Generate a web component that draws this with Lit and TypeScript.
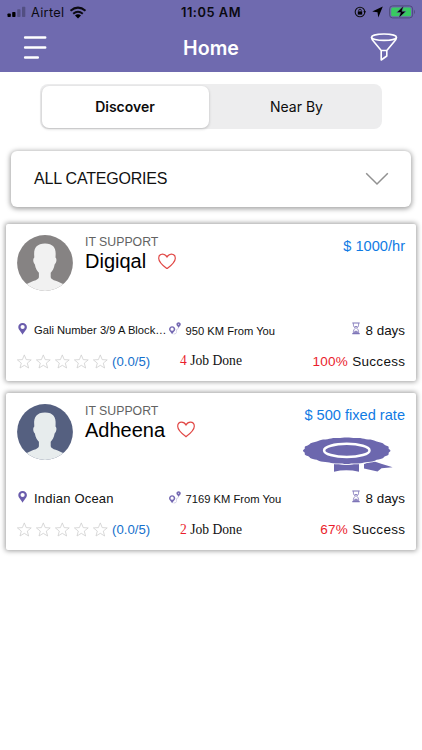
import { LitElement, html, css, svg, nothing } from "lit";
import { customElement, property } from "lit/decorators.js";

interface Provider {
  category: string;
  name: string;
  price: string;
  place: string;
  longPlace: boolean;
  distance: string;
  days: string;
  jobs: string;
  success: string;
  dark: boolean;
  badge: boolean;
}

const providers: Provider[] = [
  { category: "IT SUPPORT", name: "Digiqal", price: "$ 1000/hr", place: "Gali Number 3/9 A Block…", longPlace: true, distance: "950 KM From You", days: "8 days", jobs: "4", success: "100%", dark: false, badge: false },
  { category: "IT SUPPORT", name: "Adheena", price: "$ 500 fixed rate", place: "Indian Ocean", longPlace: false, distance: "7169 KM From You", days: "8 days", jobs: "2", success: "67%", dark: true, badge: true },
];

// Scalloped outline of the ribbon rosette
const rosette = Array.from({ length: 120 }, (_, i) => {
  const a = (i / 120) * Math.PI * 2;
  const k = 0.985 + 0.015 * Math.cos(a * 20);
  return `${(43.7 + 43.8 * k * Math.cos(a)).toFixed(1)},${(13.7 + 13.3 * k * Math.sin(a)).toFixed(1)}`;
}).join(" ");

const star = svg`<path d="M7.5 .9 9.4 5.6 14.4 5.9 10.5 9.1 11.8 14 7.5 11.3 3.2 14 4.5 9.1 .6 5.9 5.6 5.6Z" fill="none" stroke="#cfcfcf" stroke-width=".8"/>`;

@customElement("provider-card")
export class ProviderCard extends LitElement {
  @property({ attribute: false }) item!: Provider;

  static styles = css`
    :host { display: flex; flex-direction: column; box-sizing: border-box; height: 157px; padding: 0 11px; background: #fff; border-radius: 2px; box-shadow: 0 0 5px 1px rgba(0, 0, 0, .38); font-family: "Liberation Sans", Arial, sans-serif; color: #111; }
    svg { display: block; flex: none; }
    .top { display: flex; height: 94px; padding-top: 11px; box-sizing: border-box; }
    .avatar { width: 56px; height: 56px; }
    .who { flex: 1; padding-left: 12px; }
    .cat { font-size: 12.3px; line-height: 14px; color: #626262; }
    .name { display: flex; align-items: center; gap: 12px; font-size: 20px; line-height: 24px; color: #000; white-space: nowrap; }
    .side { display: flex; flex-direction: column; align-items: flex-end; }
    .price { font-size: 14.6px; line-height: 22px; color: #107be4; white-space: nowrap; }
    .badge { margin: 11px 12.5px 0 0; }
    .row { display: grid; grid-template-columns: 17px 134px 17.5px 1fr auto; align-items: center; height: 24px; white-space: nowrap; }
    .pin { margin-top: -3px; }
    .route { margin-top: -1px; }
    .place { font-size: 13px; letter-spacing: .2px; }
    .place.long { font-size: 11.2px; letter-spacing: 0; }
    .dist { font-size: 11.2px; padding-top: 1px; }
    .days { display: flex; gap: 6px; font-size: 13.4px; }
    .days svg { margin-top: -1px; }
    .stats { display: grid; grid-template-columns: 163px 1fr auto; align-items: center; height: 38px; white-space: nowrap; }
    .rating { display: flex; align-items: center; }
    .rate { font-size: 13.2px; color: #1670cc; }
    .job { font-family: "Liberation Serif", "Times New Roman", serif; font-size: 13.6px; }
    .red { color: #ea1d2c; }
    .success { font-size: 13.5px; letter-spacing: .3px; margin-right: -.3px; }
  `;

  render() {
    const p = this.item;
    const bg = p.dark ? "#556080" : "#868383";
    const fg = p.dark ? "#e7eced" : "#f1f1f1";
    return html`
      <div class="top">
        <svg class="avatar" viewBox="0 0 57 57">
          <clipPath id="round"><circle cx="28.5" cy="28.5" r="28.4"/></clipPath>
          <g clip-path="url(#round)">
            <rect width="57" height="57" fill=${bg}/>
            <path fill=${fg} d="M28.5 8.6C37 8.6 39.8 13.5 39.3 20.5L39.2 23C41 24.5 40 28.5 38.3 30C37.7 34 36 36.5 34.3 38.5V43C35 46.5 42.5 46.8 48 50.5V57H9V50.5C14.5 46.8 21.5 46.5 22.3 43V38.5C20.5 36.5 18.8 34 18.2 30C16.5 28.5 15.8 24.5 17.6 23L17.5 20.5C17 13.5 20 8.6 28.5 8.6Z"/>
          </g>
        </svg>
        <div class="who">
          <div class="cat">${p.category}</div>
          <div class="name">${p.name}
            <svg width="18" height="16.5" viewBox="1 .5 18 16.5"><path d="M10 16.2C7.5 14.3 1.7 10 1.7 5.7C1.7 3.3 3.4 1.6 5.6 1.6C7.6 1.6 9.1 2.8 10 4.5C10.9 2.8 12.4 1.6 14.4 1.6C16.6 1.6 18.3 3.3 18.3 5.7C18.3 10 12.5 14.3 10 16.2Z" fill="none" stroke="#e14745" stroke-width="1.2"/></svg>
          </div>
        </div>
        <div class="side">
          <div class="price">${p.price}</div>
          ${p.badge ? html`<svg class="badge" width="90" height="36" viewBox="0 0 90 36">
            <path d="M31 26.3Q43 29 56 26.3V34.7Q43 32 31 34.7Z M61 27 70 24 79 27 89.7 30.2 78.5 31.2 74.5 34.6 61 31.4Z" fill="#6c67ae"/>
            <polygon points=${rosette} fill="#6c67ae" stroke="#fff" stroke-width="1.6" paint-order="stroke"/>
            <ellipse cx="43.8" cy="13.4" rx="22.7" ry="6.6" fill="#6c67ae" stroke="#fff" stroke-width="2.5"/>
          </svg>` : nothing}
        </div>
      </div>
      <div class="row">
        <svg class="pin" width="11" height="14" viewBox="0 0 11 14"><path fill-rule="evenodd" fill="#6a5cac" d="M5.6 1C8.1 1 9.9 2.7 9.9 5.1C9.9 8 7.4 9.3 5.6 12.7C3.8 9.3 1.3 8 1.3 5.1C1.3 2.7 3.1 1 5.6 1ZM5.6 2.9A2.1 2.1 0 1 0 5.6 7.1A2.1 2.1 0 1 0 5.6 2.9Z"/></svg>
        <span class="place ${p.longPlace ? "long" : ""}">${p.place}</span>
        <svg class="route" width="14" height="15" viewBox="-.5 0 14 15"><g fill="#7569b2" fill-rule="evenodd"><path d="M3.6 4.2C5.6 4.2 6.8 5.6 6.8 7.3C6.8 9.2 4.8 10 3.6 12.2C2.4 10 .5 9.2 .5 7.3C.5 5.6 1.8 4.2 3.6 4.2ZM3.6 5.6A1.6 1.6 0 1 0 3.6 8.8A1.6 1.6 0 1 0 3.6 5.6Z"/><path d="M10.1 .2C11.5 .2 12.3 1.2 12.3 2.3C12.3 3.7 10.9 4.3 10.1 5.9C9.3 4.3 7.9 3.7 7.9 2.3C7.9 1.2 8.7 .2 10.1 .2ZM10.1 1.7A.5 .5 0 1 0 10.1 2.7A.5 .5 0 1 0 10.1 1.7Z"/></g><path d="M5 12Q8.5 12 7.9 9.5T10 6.5" fill="none" stroke="#c9c5e2" stroke-width=".8"/></svg>
        <span class="dist">${p.distance}</span>
        <span class="days">
          <svg width="8" height="13" viewBox="0 0 8 13"><g fill="none" stroke="#7d74b7"><path d="M.3 1H7.7M.3 11.6H7.7" stroke-width="1.2"/><path d="M1.4 1.2V3.2Q1.4 4.8 3.3 6.2Q1.4 7.8 1.4 9.5V11.4M6.6 1.2V3.2Q6.6 4.8 4.7 6.2Q6.6 7.8 6.6 9.5V11.4" stroke-width=".8"/></g><path d="M2.1 4H5.9L4 6ZM1.8 11V9.8L4 8.4 6.2 9.8V11Z" fill="#9188c2"/></svg>
          ${p.days}
        </span>
      </div>
      <div class="stats">
        <div class="rating">
          <svg width="95" height="15" viewBox="0 0 95 15">${[0, 1, 2, 3, 4].map((i) => svg`<g transform="translate(${i * 19 - 0.2} 0)">${star}</g>`)}</svg>
          <span class="rate">(0.0/5)</span>
        </div>
        <span class="job"><span class="red">${p.jobs}</span> Job Done</span>
        <span class="success"><span class="red">${p.success}</span> Success</span>
      </div>`;
  }
}

@customElement("app-root")
export class AppRoot extends LitElement {
  static styles = css`
    :host { display: flex; flex-direction: column; height: 750px; background: #fff; font-family: "Liberation Sans", Arial, sans-serif; overflow: hidden; }
    svg { display: block; flex: none; }
    header { height: 72px; background: #6f6aaf; font-family: Inter, sans-serif; }
    .status { display: grid; grid-template-columns: 1fr auto 1fr; align-items: center; height: 24px; padding: 0 7px; color: #0b0a12; }
    .carrier { display: flex; align-items: center; font-size: 12.8px; letter-spacing: .3px; gap: 5px; }
    .time { font-size: 12.8px; font-weight: 600; letter-spacing: .55px; }
    .power { display: flex; justify-content: flex-end; align-items: center; gap: 6px; }
    .nav { display: grid; grid-template-columns: 1fr auto 1fr; align-items: center; height: 47px; padding: 0 24px 0 23px; }
    .title { color: #fff; font-size: 19.6px; font-weight: 600; line-height: 24px; padding: 1px 0 0 1px; }
    .funnel { justify-self: end; }
    .tabs { display: flex; flex: none; box-sizing: border-box; width: 342px; height: 45px; margin: 12px 0 0 40px; padding: 1.5px; background: #ededee; border-radius: 8px; font-family: Inter, sans-serif; font-size: 14px; color: #0c0c0c; }
    .tab { flex: 1; display: flex; align-items: center; justify-content: center; padding-left: 4px; }
    .tab.on { flex: 0 0 167px; padding: 0; background: #fff; border-radius: 7px; font-weight: 600; box-shadow: 0 1px 3px rgba(0, 0, 0, .22); }
    .select { display: flex; flex: none; align-items: center; justify-content: space-between; box-sizing: border-box; height: 56px; margin: 22px 11px 0; padding: 0 22px 0 23px; border-radius: 6px; box-shadow: 0 1px 5px 1px rgba(0, 0, 0, .37); font-size: 16px; letter-spacing: -.2px; color: #111; }
    .list { display: flex; flex-direction: column; gap: 11.5px; margin: 17px 6px 0; }
  `;

  render() {
    return html`
      <header>
        <div class="status">
          <div class="carrier">
            <svg width="19" height="12" viewBox="0 0 19 12"><rect x=".5" y="7.5" width="3.3" height="3.5" rx=".7"/><rect x="5.2" y="6" width="3.3" height="5" rx=".7"/><g opacity=".25"><rect x="10.2" y="3.3" width="3.3" height="7.7" rx=".7"/><rect x="15" y=".7" width="3.3" height="10.3" rx=".7"/></g></svg>
            Airtel
            <svg width="18" height="13" viewBox="0 0 18 13"><g fill="none" stroke="#0b0a12" stroke-width="2"><path d="M1.5 4.8Q9-1.5 16.5 4.8M4.2 7.8Q9 3.8 13.8 7.8"/></g><path d="M6 9.5Q9 7 12 9.5L9 12.5Z"/></svg>
          </div>
          <div class="time">11:05 AM</div>
          <div class="power">
            <svg width="12" height="12" viewBox="0 0 12 12"><circle cx="6" cy="6" r="4.8" fill="none" stroke="#111" stroke-width="1.1"/><rect x="3.8" y="5.4" width="4.4" height="3.2"/><path d="M4.7 5.5V4.5A1.3 1.3 0 0 1 7.3 4.5V5.5" fill="none" stroke="#111" stroke-width=".9"/><path d="M9.3 5.2H12L10.7 7.2Z"/></svg>
            <svg width="11" height="12" viewBox="0 0 11 12"><path d="M10.8 .5 6.3 11.6 5.5 6.3 .2 5.5Z"/></svg>
            <svg width="26" height="14" viewBox="0 0 26 14"><rect x=".6" y=".9" width="23" height="12" rx="3" fill="none" stroke="#4e4a7c"/><rect x="2.2" y="2.5" width="19.8" height="8.8" rx="1.6" fill="#38ca61"/><path d="M25 4.8Q26.8 7 25 9.2Z" fill="#4e4a7c"/><path d="M14.7 .8 7.7 7.5H11.6L9.8 13 17 6.3H12.9Z" stroke="#6f6aaf" stroke-width=".5"/></svg>
          </div>
        </div>
        <div class="nav">
          <svg width="26" height="26" viewBox="0 0 26 26"><path d="M2.1 2.5H22.2M2.1 12.5H22.2M2.1 22.5H14.8" stroke="#fff" stroke-width="2.5" stroke-linecap="round"/></svg>
          <div class="title">Home</div>
          <svg class="funnel" width="28" height="29" viewBox="0 0 28 29"><g fill="none" stroke="#fff" stroke-width="1.6" stroke-linejoin="round"><ellipse cx="14" cy="4.2" rx="12.5" ry="3.2"/><path d="M1.5 4.4Q1.8 6.4 3.3 8L11.2 17.5V27L16.8 23V17.5L24.7 8Q26.2 6.4 26.5 4.4M11.2 17.5H16.8"/></g></svg>
        </div>
      </header>
      <div class="tabs"><div class="tab on">Discover</div><div class="tab">Near By</div></div>
      <div class="select">ALL CATEGORIES
        <svg width="24" height="14" viewBox="0 0 24 14"><path d="M1.2 1.3 12 12 22.8 1.3" fill="none" stroke="#919191" stroke-width="1.5"/></svg>
      </div>
      <div class="list">${providers.map((p) => html`<provider-card .item=${p}></provider-card>`)}</div>`;
  }
}
